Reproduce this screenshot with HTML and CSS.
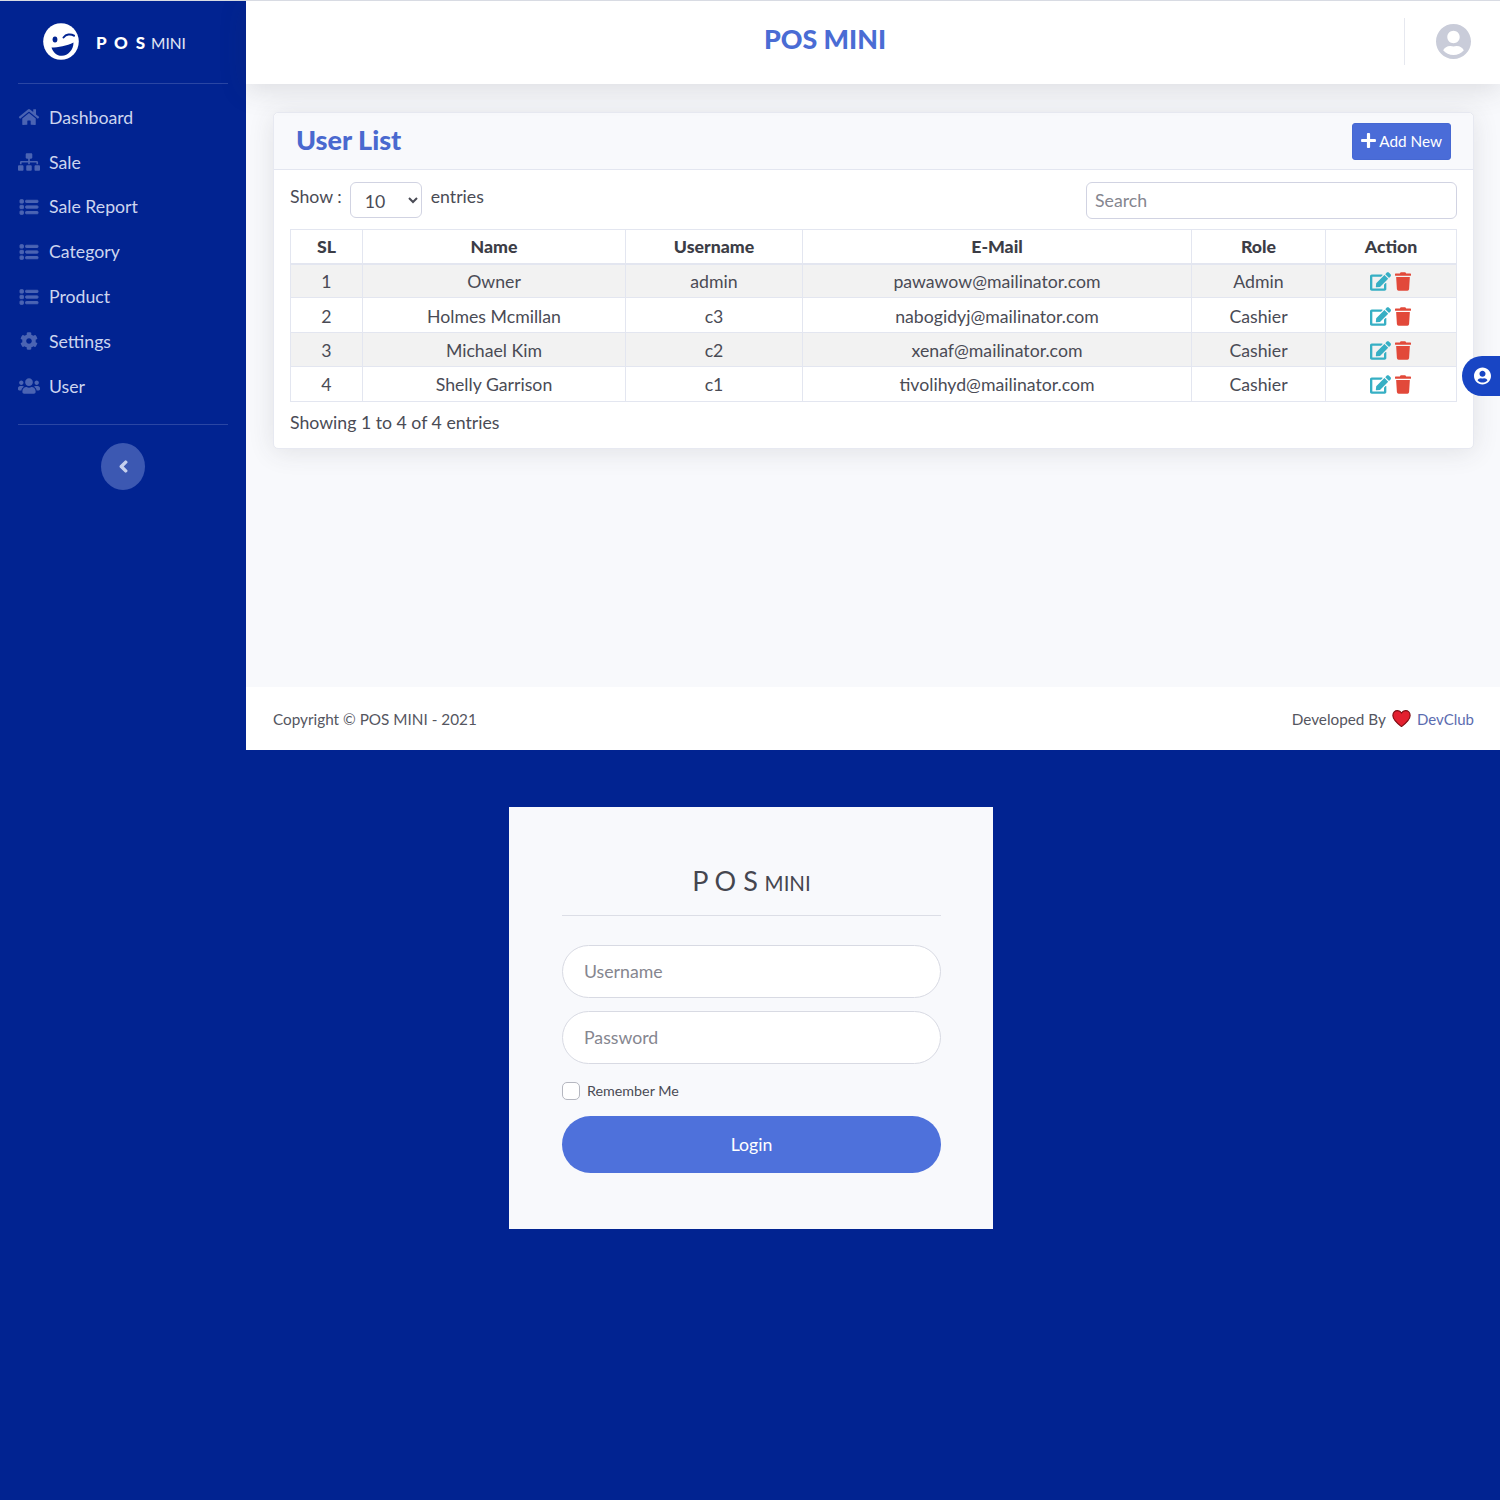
FILE: index.html
```html
<!DOCTYPE html>
<html lang="en">
<head>
<meta charset="utf-8">
<title>POS MINI</title>
<link rel="stylesheet" href="styles.css">
</head>
<body>
<svg class="defs" aria-hidden="true">
<defs>
<symbol id="i-home" viewBox="0 0 576 512"><path d="M280.37 148.26L96 300.11V464a16 16 0 0 0 16 16l112.06-.29a16 16 0 0 0 15.92-16V368a16 16 0 0 1 16-16h64a16 16 0 0 1 16 16v95.64a16 16 0 0 0 16 16.05L464 480a16 16 0 0 0 16-16V300L295.67 148.26a12.19 12.19 0 0 0-15.3 0zM571.6 251.47L488 182.56V44.05a12 12 0 0 0-12-12h-56a12 12 0 0 0-12 12v72.61L318.47 43a48 48 0 0 0-61 0L4.34 251.47a12 12 0 0 0-1.6 16.9l25.5 31A12 12 0 0 0 45.15 301l235.22-193.74a12.19 12.19 0 0 1 15.3 0L530.9 301a12 12 0 0 0 16.9-1.6l25.5-31a12 12 0 0 0-1.7-16.93z"/></symbol>
<symbol id="i-sitemap" viewBox="0 0 640 512"><path d="M128 352H32c-17.67 0-32 14.33-32 32v96c0 17.67 14.33 32 32 32h96c17.67 0 32-14.33 32-32v-96c0-17.67-14.33-32-32-32zm-24-80h192v48h48v-48h192v48h48v-57.59c0-21.17-17.23-38.41-38.41-38.41H344v-64h40c17.67 0 32-14.33 32-32V32c0-17.67-14.33-32-32-32H256c-17.67 0-32 14.33-32 32v96c0 17.67 14.33 32 32 32h40v64H94.41C73.23 224 56 241.23 56 262.41V320h48v-48zm264 80h-96c-17.67 0-32 14.33-32 32v96c0 17.67 14.33 32 32 32h96c17.67 0 32-14.33 32-32v-96c0-17.67-14.33-32-32-32zm240 0h-96c-17.67 0-32 14.33-32 32v96c0 17.67 14.33 32 32 32h96c17.67 0 32-14.33 32-32v-96c0-17.67-14.33-32-32-32z"/></symbol>
<symbol id="i-list" viewBox="0 0 512 512"><path d="M80 368H16a16 16 0 0 0-16 16v64a16 16 0 0 0 16 16h64a16 16 0 0 0 16-16v-64a16 16 0 0 0-16-16zm0-320H16A16 16 0 0 0 0 64v64a16 16 0 0 0 16 16h64a16 16 0 0 0 16-16V64a16 16 0 0 0-16-16zm0 160H16a16 16 0 0 0-16 16v64a16 16 0 0 0 16 16h64a16 16 0 0 0 16-16v-64a16 16 0 0 0-16-16zm416 176H176a16 16 0 0 0-16 16v32a16 16 0 0 0 16 16h320a16 16 0 0 0 16-16v-32a16 16 0 0 0-16-16zm0-320H176a16 16 0 0 0-16 16v32a16 16 0 0 0 16 16h320a16 16 0 0 0 16-16V80a16 16 0 0 0-16-16zm0 160H176a16 16 0 0 0-16 16v32a16 16 0 0 0 16 16h320a16 16 0 0 0 16-16v-32a16 16 0 0 0-16-16z"/></symbol>
<symbol id="i-cog" viewBox="0 0 512 512"><path d="M487.4 315.7l-42.6-24.6c4.3-23.2 4.3-47 0-70.2l42.6-24.6c4.9-2.8 7.1-8.6 5.5-14-11.1-35.6-30-67.8-54.7-94.6-3.8-4.1-10-5.1-14.8-2.3L380.8 110c-17.9-15.4-38.5-27.3-60.8-35.1V25.8c0-5.6-3.9-10.5-9.4-11.7-36.7-8.2-74.3-7.8-109.2 0-5.5 1.2-9.4 6.1-9.4 11.7V75c-22.2 7.9-42.8 19.8-60.8 35.1L88.7 85.5c-4.9-2.8-11-1.9-14.8 2.3-24.7 26.7-43.6 58.9-54.7 94.6-1.7 5.4.6 11.2 5.5 14L67.3 221c-4.3 23.2-4.3 47 0 70.2l-42.6 24.6c-4.9 2.8-7.1 8.6-5.5 14 11.1 35.6 30 67.8 54.7 94.6 3.8 4.1 10 5.1 14.8 2.3l42.6-24.6c17.9 15.4 38.5 27.3 60.8 35.1v49.2c0 5.6 3.9 10.5 9.4 11.7 36.7 8.2 74.3 7.8 109.2 0 5.5-1.2 9.4-6.1 9.4-11.7v-49.2c22.2-7.9 42.8-19.8 60.8-35.1l42.6 24.6c4.9 2.8 11 1.9 14.8-2.3 24.7-26.7 43.6-58.9 54.7-94.6 1.5-5.5-.7-11.3-5.6-14.1zM256 336c-44.1 0-80-35.9-80-80s35.9-80 80-80 80 35.9 80 80-35.9 80-80 80z"/></symbol>
<symbol id="i-users" viewBox="0 0 640 512"><path d="M96 224c35.3 0 64-28.7 64-64s-28.7-64-64-64-64 28.7-64 64 28.7 64 64 64zm448 0c35.3 0 64-28.7 64-64s-28.7-64-64-64-64 28.7-64 64 28.7 64 64 64zm32 32h-64c-17.6 0-33.5 7.1-45.1 18.6 40.3 22.1 68.9 62 75.1 109.4h66c17.7 0 32-14.3 32-32v-32c0-35.3-28.7-64-64-64zm-256 0c61.9 0 112-50.1 112-112S381.9 32 320 32 208 82.1 208 144s50.1 112 112 112zm76.8 32h-8.3c-20.8 10-43.9 16-68.5 16s-47.6-6-68.5-16h-8.3C179.6 288 128 339.6 128 403.2V432c0 26.5 21.5 48 48 48h288c26.5 0 48-21.5 48-48v-28.8c0-63.6-51.6-115.2-115.2-115.2zm-223.7-13.4C161.5 263.1 145.6 256 128 256H64c-35.3 0-64 28.7-64 64v32c0 17.7 14.3 32 32 32h65.9c6.3-47.4 34.9-87.3 75.2-109.4z"/></symbol>
<symbol id="i-chev" viewBox="0 0 320 512"><path d="M34.52 239.03L228.87 44.69c9.37-9.37 24.57-9.37 33.94 0l22.67 22.67c9.36 9.36 9.38 24.54.04 33.92L131.49 256l154.02 154.75c9.34 9.38 9.32 24.56-.04 33.92l-22.67 22.67c-9.37 9.37-24.57 9.37-33.94 0L34.52 272.97c-9.37-9.37-9.37-24.57 0-33.94z"/></symbol>
<symbol id="i-plus" viewBox="0 0 448 512"><path d="M416 208H272V64c0-17.67-14.33-32-32-32h-32c-17.67 0-32 14.33-32 32v144H32c-17.67 0-32 14.33-32 32v32c0 17.67 14.33 32 32 32h144v144c0 17.67 14.33 32 32 32h32c17.67 0 32-14.33 32-32V304h144c17.67 0 32-14.33 32-32v-32c0-17.67-14.33-32-32-32z"/></symbol>
<symbol id="i-edit" viewBox="0 0 576 512"><path d="M402.6 83.2l90.2 90.2c3.8 3.8 3.8 10 0 13.8L274.4 405.6l-92.8 10.3c-12.4 1.4-22.9-9.1-21.5-21.5l10.3-92.8L388.8 83.2c3.8-3.8 10-3.8 13.8 0zm162-22.9l-48.8-48.8c-15.2-15.2-39.9-15.2-55.2 0l-35.4 35.4c-3.8 3.8-3.8 10 0 13.8l90.2 90.2c3.8 3.8 10 3.8 13.8 0l35.4-35.4c15.2-15.3 15.2-40 0-55.2zM384 346.2V448H64V128h229.8c3.2 0 6.2-1.3 8.5-3.5l40-40c7.6-7.6 2.2-20.5-8.5-20.5H48C21.5 64 0 85.5 0 112v352c0 26.5 21.5 48 48 48h352c26.5 0 48-21.5 48-48V306.2c0-10.7-12.9-16-20.5-8.5l-40 40c-2.2 2.3-3.5 5.3-3.5 8.5z"/></symbol>
<symbol id="i-trash" viewBox="0 0 448 512"><path d="M432 32H312l-9.4-18.7A24 24 0 0 0 281.1 0H166.8a23.72 23.72 0 0 0-21.4 13.3L136 32H16A16 16 0 0 0 0 48v32a16 16 0 0 0 16 16h416a16 16 0 0 0 16-16V48a16 16 0 0 0-16-16zM53.2 467a48 48 0 0 0 47.9 45h245.8a48 48 0 0 0 47.9-45L416 128H32z"/></symbol>
<symbol id="i-user" viewBox="0 0 496 512"><path d="M248 8C111 8 0 119 0 256s111 248 248 248 248-111 248-248S385 8 248 8zm0 96c48.6 0 88 39.4 88 88s-39.4 88-88 88-88-39.4-88-88 39.4-88 88-88zm0 344c-58.7 0-111.3-26.6-146.5-68.2 18.8-35.4 55.6-59.8 98.5-59.8 2.4 0 4.8.4 7.1 1.1 13 4.2 26.6 6.9 40.9 6.9 14.3 0 28-2.7 40.9-6.9 2.3-.7 4.7-1.1 7.1-1.1 42.9 0 79.7 24.4 98.5 59.8C359.3 421.4 306.7 448 248 448z"/></symbol>
</defs>
</svg>

<section class="app">
  <aside class="sidebar">
    <div class="brand">
      <svg class="logo" viewBox="0 0 36 37">
        <ellipse cx="18" cy="18.500" rx="17.800" ry="18.300" fill="#fff"/>
        <ellipse cx="12" cy="16.500" rx="2.400" ry="2.900" fill="#012391"/>
        <path d="M20.500 14.500c2.500-3.200 7-4 10.500-1.800" fill="none" stroke="#012391" stroke-width="2" stroke-linecap="round"/>
        <path d="M8.500 24.500C15 24.500 24 23 30.500 19.500 30.500 27 25 32.500 19 32.800 14 33 10 29.500 8.500 24.500z" fill="#012391"/>
      </svg>
      <span class="brand-text"><b>P O S</b> <span>MINI</span></span>
    </div>
    <nav class="nav">
      <a class="nav-link"><svg class="nav-icon"><use href="#i-home"/></svg>Dashboard</a>
      <a class="nav-link"><svg class="nav-icon"><use href="#i-sitemap"/></svg>Sale</a>
      <a class="nav-link"><svg class="nav-icon thick"><use href="#i-list"/></svg>Sale Report</a>
      <a class="nav-link"><svg class="nav-icon thick"><use href="#i-list"/></svg>Category</a>
      <a class="nav-link"><svg class="nav-icon thick"><use href="#i-list"/></svg>Product</a>
      <a class="nav-link"><svg class="nav-icon"><use href="#i-cog"/></svg>Settings</a>
      <a class="nav-link"><svg class="nav-icon"><use href="#i-users"/></svg>User</a>
    </nav>
    <div class="toggle-wrap">
      <button class="toggle" type="button" aria-label="Collapse"><svg class="toggle-icon"><use href="#i-chev"/></svg></button>
    </div>
  </aside>

  <div class="main">
    <header class="topbar">
      <h1 class="top-title">POS MINI</h1>
      <div class="top-user"><svg class="avatar"><use href="#i-user"/></svg></div>
    </header>

    <main class="content">
      <div class="card">
        <div class="card-head">
          <h2 class="card-title">User List</h2>
          <button class="btn-add" type="button"><svg class="plus"><use href="#i-plus"/></svg>Add New</button>
        </div>
        <div class="card-body">
          <div class="tools">
            <label class="show">Show :
              <select class="select"><option>10</option><option>25</option></select>
              <span class="entries">entries</span>
            </label>
            <input class="search" type="text" placeholder="Search">
          </div>
          <table class="table">
            <thead>
              <tr><th class="c-sl">SL</th><th class="c-name">Name</th><th class="c-user">Username</th><th class="c-mail">E-Mail</th><th class="c-role">Role</th><th>Action</th></tr>
            </thead>
            <tbody>
              <tr><td>1</td><td>Owner</td><td>admin</td><td>pawawow@mailinator.com</td><td>Admin</td><td class="actions"><span class="act-row"><svg class="a-edit"><use href="#i-edit"/></svg><svg class="a-trash"><use href="#i-trash"/></svg></span></td></tr>
              <tr><td>2</td><td>Holmes Mcmillan</td><td>c3</td><td>nabogidyj@mailinator.com</td><td>Cashier</td><td class="actions"><span class="act-row"><svg class="a-edit"><use href="#i-edit"/></svg><svg class="a-trash"><use href="#i-trash"/></svg></span></td></tr>
              <tr><td>3</td><td>Michael Kim</td><td>c2</td><td>xenaf@mailinator.com</td><td>Cashier</td><td class="actions"><span class="act-row"><svg class="a-edit"><use href="#i-edit"/></svg><svg class="a-trash"><use href="#i-trash"/></svg></span></td></tr>
              <tr><td>4</td><td>Shelly Garrison</td><td>c1</td><td>tivolihyd@mailinator.com</td><td>Cashier</td><td class="actions"><span class="act-row"><svg class="a-edit"><use href="#i-edit"/></svg><svg class="a-trash"><use href="#i-trash"/></svg></span></td></tr>
            </tbody>
          </table>
          <p class="info">Showing 1 to 4 of 4 entries</p>
        </div>
      </div>
    </main>

    <footer class="footer">
      <span>Copyright © POS MINI - 2021</span>
      <span class="credit">Developed By
        <svg class="heart" viewBox="0 0 24 22"><path d="M12 21.500C5 16 .8 12 .8 7 .8 3.300 3.500.8 6.800.8c2.200 0 4 1 5.200 3 1.200-2 3-3 5.200-3 3.300 0 6 2.500 6 6.200 0 5-4.200 9-11.200 14.500z" fill="#e3202f" stroke="#7d1016" stroke-width="1.400"/></svg>
        <a class="credit-link">DevClub</a></span>
    </footer>
  </div>

  <div class="float-tab"><svg class="float-icon"><use href="#i-user"/></svg></div>
</section>

<section class="login">
  <form class="login-card">
    <h2 class="login-title"><span class="lt-big">P O S</span> <span class="lt-small">MINI</span></h2>
    <input class="pill" type="text" placeholder="Username">
    <input class="pill" type="password" placeholder="Password">
    <label class="remember"><span class="check"></span>Remember Me</label>
    <button class="btn-login" type="button">Login</button>
  </form>
</section>
</body>
</html>
```
FILE: styles.css
```css
* { box-sizing: border-box; }
html, body { margin: 0; padding: 0; }
body {
  font-family: Lato, "Noto Sans", Arial, sans-serif;
  font-size: 17.700px;
  color: #4a4b55;
  background: #012391;
}
.defs { display: none; }

.app {
  position: relative;
  display: flex;
  height: 750px;
  overflow: hidden;
  background: #f8f9fc;
}
.sidebar {
  flex: 0 0 246px;
  background: #012391;
  padding: 0 18px;
  border-top: 1px solid #d8dbe3;
}
.brand {
  display: flex;
  align-items: center;
  height: 83px;
  padding-left: 25px;
  border-bottom: 1px solid #2a46a4;
}
.logo { width: 36px; height: 37px; margin-right: 17px; margin-top: -2px; flex: none; }
.brand-text { color: #fff; font-size: 16px; white-space: nowrap; }
.brand-text b { font-weight: 900; font-size: 17px; letter-spacing: 1.900px; }
.brand-text span { font-size: 15.500px; color: #e3e8f6; }

.nav { display: flex; flex-direction: column; padding: 11px 0 15px; border-bottom: 1px solid #2a46a4; }
.nav-link {
  display: flex;
  align-items: center;
  height: 44.800px;
  color: #cdd5ef;
  white-space: nowrap;
}
.nav-icon { width: 22px; height: 18px; margin-right: 9px; fill: #4b64b3; flex: none; }
.thick { stroke: #4b64b3; stroke-width: 28; }

.toggle-wrap { display: flex; justify-content: center; padding-top: 18px; }
.toggle {
  width: 44px; height: 47px;
  border: 0; border-radius: 50%;
  background: #3c58b2;
  display: flex; align-items: center; justify-content: center;
  padding: 0;
}
.toggle-icon { width: 9px; height: 13px; fill: #c8d1ee; stroke: #c8d1ee; stroke-width: 50; }

.main { flex: 1; display: flex; flex-direction: column; min-width: 0; }
.topbar {
  position: relative;
  height: 84px;
  background: #fff;
  border-top: 1px solid #d8dbe3;
  display: flex;
  align-items: center;
  box-shadow: 0 6px 28px rgba(58, 59, 69, .15);
  z-index: 1;
}
.top-title {
  margin: -8px 0 0;
  flex: 0 0 1158px;
  text-align: center;
  font-size: 26.800px;
  font-weight: 900;
  color: #4a6cd4;
}
.top-user {
  height: 47px;
  border-left: 1px solid #e6e8ef;
  padding-left: 31px;
  margin-top: -2px;
  display: flex;
  align-items: center;
}
.avatar { width: 35px; height: 37px; fill: #c9ccd9; }

.content { flex: 1; padding: 28px 26px 0 27px; }
.card {
  background: #fff;
  border: 1px solid #e7e9f1;
  border-radius: 5px;
  box-shadow: 0 3px 26px rgba(58, 59, 69, .12);
}
.card-head {
  display: flex;
  align-items: center;
  justify-content: space-between;
  height: 57px;
  padding: 0 22px 0 22px;
  background: #f8f9fc;
  border-bottom: 1px solid #e3e6f0;
  border-radius: 5px 5px 0 0;
}
.card-title { margin: -3px 0 0; font-size: 27px; font-weight: 900; color: #4a69cf; }
.btn-add {
  display: flex; align-items: center;
  height: 37px;
  padding: 0 8px 1px;
  background: #4a6cd8;
  color: #fff;
  border: 1px solid #4668d2;
  border-radius: 3px;
  font: inherit;
  font-size: 15.300px;
}
.plus { width: 15px; height: 17px; fill: #fff; margin-right: 3px; }
.card-body { padding: 12px 16px 13px; }
.tools { display: flex; justify-content: space-between; align-items: flex-start; }
.show { display: flex; align-items: center; height: 36px; color: #4a4b55; white-space: nowrap; padding-bottom: 7px; }
.select {
  width: 72px; height: 36px;
  margin: 0 9px 0 8px;
  padding: 3px 0 0 10px;
  border: 1px solid #d1d3e2;
  border-radius: 6px;
  background-color: #fff;
  color: #4a4b55;
  font: inherit;
  position: relative;
  top: 3.500px;
}
.search {
  width: 371px; height: 37px;
  padding: 0 8px;
  border: 1px solid #d1d3e2;
  border-radius: 6px;
  font: inherit;
  color: #4a4b55;
}
.search::placeholder, .pill::placeholder { color: #85868f; opacity: 1; }

.table {
  width: 1167px;
  margin-top: 10px;
  border-collapse: collapse;
  table-layout: fixed;
  color: #4a4b55;
}
.table th, .table td { border: 1px solid #e3e6f0; text-align: center; padding: 0; white-space: nowrap; }
.table th { height: 34px; font-weight: 900; color: #3c3d46; border-bottom-width: 2px; }
.table td { height: 34.400px; padding-top: 2px; }
.table tbody tr:nth-child(odd) { background: #f2f2f2; }
.c-sl { width: 72px; }
.c-name { width: 263px; }
.c-user { width: 177px; }
.c-mail { width: 389px; }
.c-role { width: 134px; }
.act-row { display: flex; align-items: center; justify-content: center; }
.a-edit { width: 21px; height: 19px; fill: #36afc4; margin-right: 4px; }
.a-trash { width: 16px; height: 19px; fill: #e2493a; margin-right: 1px; }
.info { margin: 9px 0 0; line-height: 24px; }

.footer {
  height: 63px;
  background: #fff;
  padding: 0 26px 0 27px;
  display: flex;
  justify-content: space-between;
  align-items: center;
  font-size: 15.300px;
  color: #55565f;
}
.credit { display: flex; align-items: center; gap: 5px; }
.heart { width: 19px; height: 17px; margin: 0 1px; }
.credit-link { color: #5b6cb0; font-size: 15px; }

.float-tab {
  position: absolute;
  right: 0; top: 356px;
  width: 38px; height: 40px;
  background: #1845c4;
  border-radius: 20px 0 0 20px;
  display: flex; align-items: center; justify-content: center;
}
.float-icon { width: 17px; height: 18px; fill: #fff; margin-left: 2px; }

.login {
  height: 750px;
  background: #012391;
  padding-top: 57px;
  display: flex;
  justify-content: center;
  align-items: flex-start;
}
.login-card {
  width: 484px;
  margin-left: 2px;
  height: 422px;
  background: #f8f9fc;
  padding: 57px 52px 0 53px;
  display: flex;
  flex-direction: column;
}
.login-title {
  margin: 0 0 28.500px;
  height: 52px;
  text-align: center;
  font-weight: 400;
  color: #45464f;
  border-bottom: 1px solid #dcdee6;
  white-space: nowrap;
}
.lt-big { font-size: 27px; font-weight: 400; }
.lt-small { font-size: 20.500px; font-weight: 400; }
.pill {
  height: 53px;
  margin-bottom: 13px;
  padding: 0 21px;
  border: 1px solid #d8dae3;
  border-radius: 27px;
  background: #fff;
  font: inherit;
  color: #4a4b55;
}
.remember { display: flex; align-items: center; font-size: 14.300px; color: #4a4b55; height: 24px; margin: 2px 0 0; }
.check {
  width: 18px; height: 18px;
  margin-right: 7px;
  background: #fff;
  border: 1px solid #b5b7c0;
  border-radius: 5px;
}
.btn-login {
  height: 57px;
  margin-top: 13px;
  border: 0;
  border-radius: 29px;
  background: #4e71db;
  color: #fff;
  font: inherit;
}
```
